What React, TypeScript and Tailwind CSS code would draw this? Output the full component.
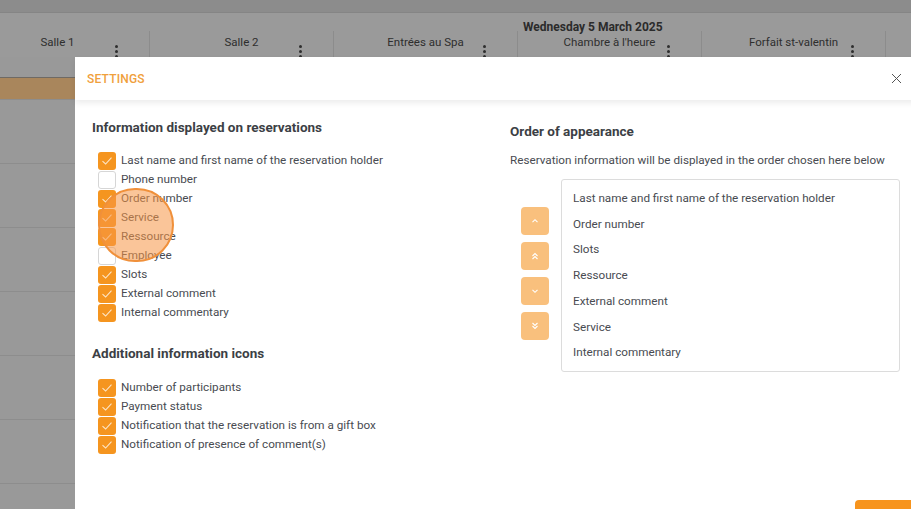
import React from "react";

const cols = ["Salle 1", "Salle 2", "Entrées au Spa", "Chambre à l'heure", "Forfait st-valentin"];

const info: [string, boolean][] = [
  ["Last name and first name of the reservation holder", true],
  ["Phone number", false],
  ["Order number", true],
  ["Service", true],
  ["Ressource", true],
  ["Employee", false],
  ["Slots", true],
  ["External comment", true],
  ["Internal commentary", true],
];

const icons = [
  "Number of participants",
  "Payment status",
  "Notification that the reservation is from a gift box",
  "Notification of presence of comment(s)",
];

const order = [
  "Last name and first name of the reservation holder",
  "Order number",
  "Slots",
  "Ressource",
  "External comment",
  "Service",
  "Internal commentary",
];

function Kebab() {
  return (
    <div className="flex flex-col items-center gap-[2px]">
      <span className="w-[3px] h-[3px] rounded-full bg-[#2e2e2e]" />
      <span className="w-[3px] h-[3px] rounded-full bg-[#2e2e2e]" />
      <span className="w-[3px] h-[3px] rounded-full bg-[#2e2e2e]" />
    </div>
  );
}

function Check({ on, label }: { on: boolean; label: string }) {
  return (
    <div className="flex items-center h-[19px] pl-[6px]">
      {on ? (
        <span className="w-[18px] h-[18px] rounded-[3px] bg-[#f5951f] flex items-center justify-center">
          <svg width="12" height="10" viewBox="0 0 12 10" fill="none">
            <path d="M1.5 5.2 L4.6 8 L10.5 1.6" stroke="#fde6c8" strokeWidth="1.1" />
          </svg>
        </span>
      ) : (
        <span className="w-[18px] h-[18px] rounded-[3px] bg-white border border-[#d6d6d6]" />
      )}
      <span className="ml-[5px] text-[11.7px] text-[#484b51] leading-none">{label}</span>
    </div>
  );
}

function Chevron({ double, down }: { double?: boolean; down?: boolean }) {
  return (
    <svg width="10" height="10" viewBox="0 0 10 10" fill="none" className={down ? "rotate-180" : ""}>
      {double ? (
        <>
          <path d="M2.5 5 L5 2.5 L7.5 5" stroke="white" strokeWidth="1.1" />
          <path d="M2.5 8 L5 5.5 L7.5 8" stroke="white" strokeWidth="1.1" />
        </>
      ) : (
        <path d="M2.5 6.2 L5 3.7 L7.5 6.2" stroke="white" strokeWidth="1.1" />
      )}
    </svg>
  );
}

export default function App() {
  return (
    <div
      className="relative w-[911px] h-[509px] overflow-hidden bg-[#999999]"
      style={{ fontFamily: "Roboto, 'Liberation Sans', sans-serif" }}
    >
      {/* background page */}
      <div className="h-[13px] bg-[#8c8c8c] border-b border-[#858585]" />
      <div className="relative h-[44px] bg-[#9a9a9a]">
        <div className="absolute left-[523px] top-[5px] text-[12px] font-bold text-[#2b2b2b]">Wednesday 5 March 2025</div>
        <div className="flex ml-[-34px] pt-[18px] h-full">
          {cols.map((c) => (
            <div key={c} className="relative w-[184px] shrink-0 border-r border-[#8c8c8c] h-full">
              <div className="text-center text-[11.5px] text-[#2e2e2e] pt-[6px] leading-none">{c}</div>
              <div className="absolute right-[31px] top-[14px]">
                <Kebab />
              </div>
            </div>
          ))}
        </div>
      </div>
      <div className="h-[21px] bg-[#999999] border-b border-[#6f6a64]" />
      <div className="h-[21px] bg-[#a9865c]" />
      {[0, 1, 2, 3, 4, 5, 6].map((i) => (
        <div key={i} className="h-[64px] border-t border-[#8d8d8d]" />
      ))}

      {/* modal */}
      <div className="absolute left-[75px] top-[57px] w-[860px] h-[480px] bg-white">
        <div className="relative z-10 h-[43px] flex items-center justify-between pl-[12px] pr-[33px] shadow-[0_3px_6px_rgba(0,0,0,0.08)]">
          <span className="text-[12px] font-medium text-[#f0a03c] tracking-[0.2px]">SETTINGS</span>
          <svg width="11" height="11" viewBox="0 0 11 11" fill="none">
            <path d="M1 1 L10 10 M10 1 L1 10" stroke="#555" strokeWidth="1" />
          </svg>
        </div>
        <div className="flex">
          <div className="w-[435px] shrink-0 pl-[17px] pt-[19px]">
            <div className="text-[13.5px] font-bold text-[#3c3f45] leading-[16px]">Information displayed on reservations</div>
            <div className="mt-[16px] flex flex-col">
              {info.map(([l, on]) => (
                <Check key={l} on={on} label={l} />
              ))}
            </div>
            <div className="mt-[23px] text-[13.5px] font-bold text-[#3c3f45] leading-[16px]">Additional information icons</div>
            <div className="mt-[17px] flex flex-col">
              {icons.map((l) => (
                <Check key={l} on label={l} />
              ))}
            </div>
          </div>
          <div className="pt-[23px]">
            <div className="text-[13.5px] font-bold text-[#3c3f45] leading-[16px]">Order of appearance</div>
            <div className="mt-[15px] text-[11.7px] text-[#484b51] leading-[13px]">
              Reservation information will be displayed in the order chosen here below
            </div>
            <div className="flex mt-[12px]">
              <div className="ml-[11px] mt-[28px] flex flex-col gap-[7px]">
                <button className="w-[28px] h-[28px] rounded-[4px] bg-[#f9c07d] flex items-center justify-center">
                  <Chevron />
                </button>
                <button className="w-[28px] h-[28px] rounded-[4px] bg-[#f9c07d] flex items-center justify-center">
                  <Chevron double />
                </button>
                <button className="w-[28px] h-[28px] rounded-[4px] bg-[#f9c07d] flex items-center justify-center">
                  <Chevron down />
                </button>
                <button className="w-[28px] h-[28px] rounded-[4px] bg-[#f9c07d] flex items-center justify-center">
                  <Chevron double down />
                </button>
              </div>
              <div className="ml-[12px] w-[339px] h-[193px] border border-[#dcdcdc] rounded-[3px] pt-[6px] pl-[11px]">
                {order.map((o) => (
                  <div key={o} className="h-[25.7px] flex items-center text-[11.7px] text-[#484b51]">
                    {o}
                  </div>
                ))}
              </div>
            </div>
          </div>
        </div>
      </div>

      {/* bottom-right button peek */}
      <div className="absolute left-[855px] top-[500px] w-[70px] h-[20px] rounded-[4px] bg-[#f7941d]" />

      {/* click indicator */}
      <div className="absolute left-[98px] top-[188px] w-[76px] h-[74px] rounded-full border-2 border-[#f0903a] bg-[rgba(246,150,70,0.55)]" />
    </div>
  );
}
